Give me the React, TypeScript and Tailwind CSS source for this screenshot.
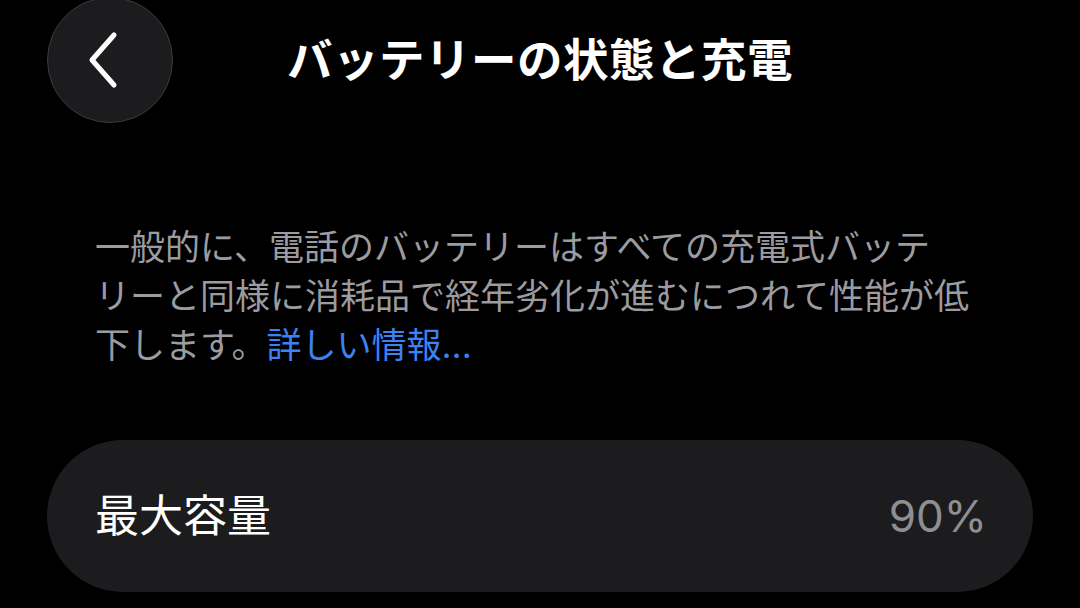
export default function App() {
  return (
    <main
      className="relative h-[608px] w-[1080px] overflow-hidden bg-black text-white"
      style={{ fontFamily: 'Inter, "Noto Sans CJK JP", sans-serif' }}
    >
      <header className="relative flex h-[122px] items-center justify-center">
        <button
          type="button"
          className="absolute left-[47px] top-[-3px] flex h-[126px] w-[126px] items-center justify-center rounded-full border border-[#3a3a3c] bg-[#1c1c1e]"
        >
          <svg width="40" height="60" viewBox="0 0 40 60" fill="none" className="-ml-[10px]">
            <path
              d="M29 5 L7 30 L29 55"
              stroke="#ffffff"
              strokeWidth="5"
              strokeLinecap="round"
              strokeLinejoin="round"
            />
          </svg>
        </button>
        <h1 className="text-[45.5px] font-bold leading-none tracking-[0.5px]">
          バッテリーの状態と充電
        </h1>
      </header>

      <section className="pl-[95px] pr-[60px] pt-[101px]">
        {/* line breaks follow the device's wrap */}
        <p className="text-[35px] leading-[49px] text-[#9b9ba0]">
          一般的に、電話のバッテリーはすべての充電式バッテ
          <br />
          リーと同様に消耗品で経年劣化が進むにつれて性能が低
          <br />
          下します。<span className="text-[#3b82f6]">詳しい情報...</span>
        </p>
      </section>

      <section className="px-[47px] pt-[70px]">
        <div className="flex h-[152px] items-center justify-between rounded-[76px] bg-[#1c1c1e] pl-[48px] pr-[46px]">
          <span className="text-[44px] leading-none">最大容量</span>
          <span className="text-[44px] leading-none text-[#8e8e93]">90%</span>
        </div>
      </section>
    </main>
  );
}
